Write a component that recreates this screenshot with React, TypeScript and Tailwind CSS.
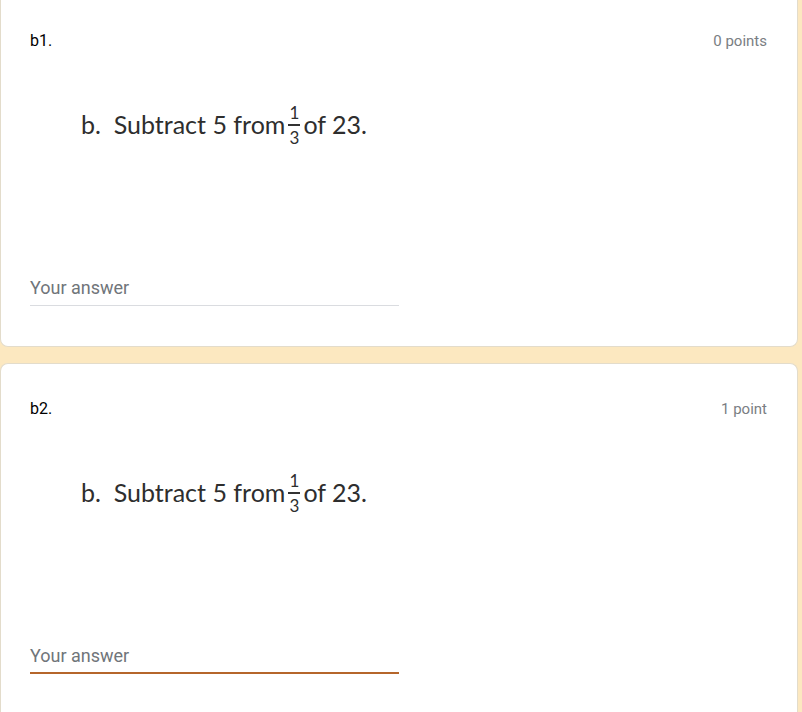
import React from "react";

function Fraction() {
  return (
    <span className="inline-flex flex-col items-center mx-[3px] leading-none text-[17px] relative top-[0px]">
      <span className="leading-none">1</span>
      <span className="block w-[12px] h-[2px] bg-[#333] my-[3px]"></span>
      <span className="leading-none">3</span>
    </span>
  );
}

function Question({
  title,
  points,
  first,
  focused,
}: {
  title: string;
  points: string;
  first?: boolean;
  focused?: boolean;
}) {
  return (
    <div
      className={
        "shrink-0 bg-white w-[798px] border border-[#e3dccb] pl-[29px] pr-[30px] " +
        (first
          ? "rounded-b-lg border-t-0 pt-[29px] h-[347px]"
          : "rounded-t-lg border-b-0 pt-[33px] h-[360px]")
      }
    >
      <div className="flex justify-between items-center h-[24px]">
        <span className="text-[16px] text-black" style={{ fontFamily: "Roboto, sans-serif" }}>
          {title}
        </span>
        <span className="text-[15px] text-[#7a7e83]" style={{ fontFamily: "Roboto, sans-serif" }}>
          {points}
        </span>
      </div>
      <div
        className="mt-[56px] pl-[51px] h-[32px] flex items-center text-[25px] text-[#2e2e2e]"
        style={{ fontFamily: "Lato, 'Open Sans', sans-serif" }}
      >
        <span>b.&nbsp; Subtract 5 from</span>
        <Fraction />
        <span>of 23.</span>
      </div>
      <div className="mt-[135px] w-[369px]">
        <div
          className="h-[24px] leading-[24px] text-[18px] text-[#70757a]"
          style={{ fontFamily: "Roboto, sans-serif" }}
        >
          Your answer
        </div>
        {focused ? (
          <div className="mt-[4px] h-[2px] bg-[#b5662b]"></div>
        ) : (
          <div className="mt-[5px] h-[1px] bg-[#dadce0]"></div>
        )}
      </div>
    </div>
  );
}

export default function App() {
  return (
    <div className="w-[802px] h-[712px] overflow-hidden bg-[#fce8c0] flex flex-col gap-[16px]">
      <Question title="b1." points="0 points" first />
      <Question title="b2." points="1 point" focused />
    </div>
  );
}
